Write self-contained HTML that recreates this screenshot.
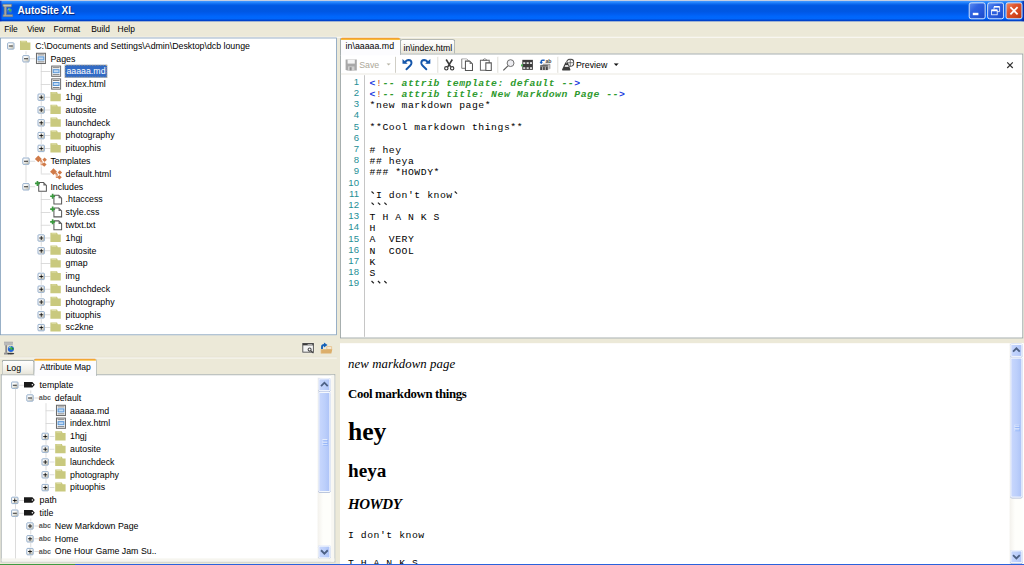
<!DOCTYPE html><html><head><meta charset="utf-8"><title>AutoSite XL</title><style>
*{box-sizing:border-box;margin:0;padding:0}
html,body{width:1024px;height:565px;overflow:hidden;background:#ece9d8}
body{font-family:"Liberation Sans",sans-serif;font-size:11px;color:#000}
#root{position:absolute;left:0;top:0;width:1280px;height:707px;transform:scale(0.8);transform-origin:0 0;background:#ece9d8;overflow:hidden}
.abs{position:absolute}
.title{left:0;top:0;width:1280px;height:27px;background:linear-gradient(to bottom,#c3cde2 0,#c3cde2 0.9px,#3a92ff 1.7px,#2686fd 3px,#0c69ef 5px,#0059e3 7px,#0057e2 14px,#005df0 17.5px,#0066fb 20.5px,#0067fc 23.5px,#0049d4 25px,#003ec2 26.4px,#2358c8 27px)}
.title .txt{left:22px;top:7px;font-weight:bold;font-size:12.5px;color:#fff;text-shadow:1px 1px 1px #0a1f6a;white-space:nowrap;letter-spacing:0px}
.menu{left:0;top:27px;width:1280px;height:19px;background:#ece9d8}
.menu span{position:absolute;top:3px;font-size:10.5px;white-space:nowrap}
.t{position:absolute;white-space:nowrap;font-size:11px;line-height:16px;height:16px}
.panel{background:#fff;border:1px solid #7f9db9}
.vl{position:absolute;width:1px;background:#d4d4d4}
.hl{position:absolute;height:1px;background:#d4d4d4}
.box{position:absolute;width:9px;height:9px;border:1px solid #7b9abf;border-radius:1.5px;background:linear-gradient(135deg,#fff 0%,#fcfcfa 35%,#b9b6a6 100%)}
.box i{position:absolute;left:1px;top:3px;width:5px;height:1px;background:#000}
.box b{position:absolute;left:3px;top:1px;width:1px;height:5px;background:#000}
.ln{font-size:12px;letter-spacing:0.4px;line-height:14px;text-align:right;color:#1e8f96}
.cd{font-family:'Liberation Mono',monospace;font-size:12.2px;letter-spacing:0.68px;line-height:14px;font-weight:normal;white-space:pre;color:#000}
.cd .bl{color:#1a3ae0}.cd .rd{color:#c8502a;font-weight:normal}.cd .gr{color:#2e9a2e;font-weight:bold}
.pv{font-family:'Liberation Serif',serif;white-space:pre;color:#000}
.sel{background:#316ac5;color:#fff;outline:1px dotted #d0b070;outline-offset:-1px}
</style></head><body><div id="root">
<div class="abs title"><div class="abs txt">AutoSite XL</div><div class="abs" style="left:0;top:1px;width:3px;height:26px;background:linear-gradient(to right,rgba(8,40,190,.9),rgba(8,40,190,0))"></div><div class="abs" style="left:1276px;top:1px;width:4px;height:26px;background:linear-gradient(to left,rgba(0,30,160,.9),rgba(0,30,160,0))"></div><svg class="abs" style="left:2px;top:4px" width="18" height="18" viewBox="0 0 18 18"><path d="M1.600 1.400h11v2.600l-1.200 .8h-5.400v9.600h7.800v2.400h-12v-2.400h1.400v-9.600l-1.600-.8z" fill="#a9a9a2" stroke="#7c7c78" stroke-width="0.800"/><path d="M2.400 2.600h9.400" stroke="#d4d4cc" stroke-width="1"/><circle cx="10" cy="9.300" r="3.300" fill="#2468e0"/><path d="M8.200 7.400q1.600-1.400 3.200-.2t.6 2.800q-1.600 1.200-2.600 0t-1.200-2.600z" fill="#3fb558"/><path d="M7.600 8.200q1-1.200 2.200-1" stroke="#bfe6ff" stroke-width="0.900" fill="none"/></svg></div>
<div class="abs menu">
<span style="left:5.2px">File</span>
<span style="left:33.6px">View</span>
<span style="left:67px">Format</span>
<span style="left:114px">Build</span>
<span style="left:147px">Help</span>
</div><div class="abs" style="left:0;top:46px;width:1280px;height:1px;background:#fff"></div>
<div class="abs panel" style="left:0;top:47px;width:421px;height:372px;overflow:hidden">
<div class="box" style="left:7.9px;top:5px"><i></i></div><svg class="abs" style="left:22px;top:1px" width="16" height="16" viewBox="0 0 16 16"><path d="M2 2h8.300l1 2.200h3.700v9.300h-13z" fill="#c9c97e"/><path d="M3.500 3.200h5.800" stroke="#dedea8" stroke-width="1.200"/></svg><div class="t" style="left:41px;top:1px;padding:0 2px;">C:\Documents and Settings\Admin\Desktop\dcb lounge</div><div class="hl" style="left:36.4px;top:25px;width:6.600000000000001px"></div><div class="box" style="left:26.9px;top:21px"><i></i></div><svg class="abs" style="left:41px;top:17px" width="16" height="16" viewBox="0 0 16 16"><rect x="3.600" y="1.600" width="11.200" height="12.800" fill="#fff" stroke="#6c6c6c" stroke-width="1.300"/><rect x="5" y="3.100" width="8.400" height="1.100" fill="#6e6e6e"/><rect x="5" y="11.800" width="8.400" height="1.100" fill="#6e6e6e"/><rect x="5.600" y="6.100" width="7.200" height="3.800" fill="#c4daf2" stroke="#5a98d8" stroke-width="1.300"/></svg><div class="t" style="left:60px;top:17px;padding:0 2px;">Pages</div><div class="hl" style="left:50.4px;top:41px;width:11.600000000000001px"></div><svg class="abs" style="left:60px;top:33px" width="16" height="16" viewBox="0 0 16 16"><rect x="3.600" y="1.600" width="11.200" height="12.800" fill="#fff" stroke="#6c6c6c" stroke-width="1.300"/><rect x="5" y="3.100" width="8.400" height="1.100" fill="#6e6e6e"/><rect x="5" y="11.800" width="8.400" height="1.100" fill="#6e6e6e"/><rect x="5.600" y="6.100" width="7.200" height="3.800" fill="#c4daf2" stroke="#5a98d8" stroke-width="1.300"/></svg><div class="t sel" style="left:80px;top:33px;padding:0 2px;">aaaaa.md</div><div class="hl" style="left:50.4px;top:57px;width:11.600000000000001px"></div><svg class="abs" style="left:60px;top:49px" width="16" height="16" viewBox="0 0 16 16"><rect x="3.600" y="1.600" width="11.200" height="12.800" fill="#fff" stroke="#6c6c6c" stroke-width="1.300"/><rect x="5" y="3.100" width="8.400" height="1.100" fill="#6e6e6e"/><rect x="5" y="11.800" width="8.400" height="1.100" fill="#6e6e6e"/><rect x="5.600" y="6.100" width="7.200" height="3.800" fill="#c4daf2" stroke="#5a98d8" stroke-width="1.300"/></svg><div class="t" style="left:79px;top:49px;padding:0 2px;">index.html</div><div class="hl" style="left:55.4px;top:73px;width:6.600000000000001px"></div><div class="box" style="left:45.9px;top:69px"><i></i><b></b></div><svg class="abs" style="left:60px;top:65px" width="16" height="16" viewBox="0 0 16 16"><path d="M2 2h8.300l1 2.200h3.700v9.300h-13z" fill="#c9c97e"/><path d="M3.500 3.200h5.800" stroke="#dedea8" stroke-width="1.200"/></svg><div class="t" style="left:79px;top:65px;padding:0 2px;">1hgj</div><div class="hl" style="left:55.4px;top:89px;width:6.600000000000001px"></div><div class="box" style="left:45.9px;top:85px"><i></i><b></b></div><svg class="abs" style="left:60px;top:81px" width="16" height="16" viewBox="0 0 16 16"><path d="M2 2h8.300l1 2.200h3.700v9.300h-13z" fill="#c9c97e"/><path d="M3.500 3.200h5.800" stroke="#dedea8" stroke-width="1.200"/></svg><div class="t" style="left:79px;top:81px;padding:0 2px;">autosite</div><div class="hl" style="left:55.4px;top:105px;width:6.600000000000001px"></div><div class="box" style="left:45.9px;top:101px"><i></i><b></b></div><svg class="abs" style="left:60px;top:97px" width="16" height="16" viewBox="0 0 16 16"><path d="M2 2h8.300l1 2.200h3.700v9.300h-13z" fill="#c9c97e"/><path d="M3.500 3.200h5.800" stroke="#dedea8" stroke-width="1.200"/></svg><div class="t" style="left:79px;top:97px;padding:0 2px;">launchdeck</div><div class="hl" style="left:55.4px;top:121px;width:6.600000000000001px"></div><div class="box" style="left:45.9px;top:117px"><i></i><b></b></div><svg class="abs" style="left:60px;top:113px" width="16" height="16" viewBox="0 0 16 16"><path d="M2 2h8.300l1 2.200h3.700v9.300h-13z" fill="#c9c97e"/><path d="M3.500 3.200h5.800" stroke="#dedea8" stroke-width="1.200"/></svg><div class="t" style="left:79px;top:113px;padding:0 2px;">photography</div><div class="hl" style="left:55.4px;top:137px;width:6.600000000000001px"></div><div class="box" style="left:45.9px;top:133px"><i></i><b></b></div><svg class="abs" style="left:60px;top:129px" width="16" height="16" viewBox="0 0 16 16"><path d="M2 2h8.300l1 2.200h3.700v9.300h-13z" fill="#c9c97e"/><path d="M3.500 3.200h5.800" stroke="#dedea8" stroke-width="1.200"/></svg><div class="t" style="left:79px;top:129px;padding:0 2px;">pituophis</div><div class="hl" style="left:36.4px;top:153px;width:6.600000000000001px"></div><div class="box" style="left:26.9px;top:149px"><i></i></div><svg class="abs" style="left:41px;top:145px;overflow:visible" width="16" height="16" viewBox="0 0 16 16"><path d="M5.900 1.300L10.200 5.600 5.900 9.900 1.600 5.600z" fill="#d07a48"/><path d="M8.500 7.200L10 9.200V12.400H12.500" fill="none" stroke="#d8885a" stroke-width="2.400"/><path d="M10 9.200V12.200H12" fill="none" stroke="#fbeee4" stroke-width="0.800"/><path d="M13.800 3.900L16.600 6.700 13.800 9.500 11 6.700z" fill="#d07a48"/><path d="M13.300 9.700L16.200 12.600 13.300 15.500 10.400 12.600z" fill="#d07a48"/></svg><div class="t" style="left:60px;top:145px;padding:0 2px;">Templates</div><div class="hl" style="left:50.4px;top:169px;width:11.600000000000001px"></div><svg class="abs" style="left:60px;top:161px;overflow:visible" width="16" height="16" viewBox="0 0 16 16"><path d="M5.900 1.300L10.200 5.600 5.900 9.900 1.600 5.600z" fill="#d07a48"/><path d="M8.500 7.200L10 9.200V12.400H12.500" fill="none" stroke="#d8885a" stroke-width="2.400"/><path d="M10 9.200V12.200H12" fill="none" stroke="#fbeee4" stroke-width="0.800"/><path d="M13.800 3.900L16.600 6.700 13.800 9.500 11 6.700z" fill="#d07a48"/><path d="M13.300 9.700L16.200 12.600 13.300 15.500 10.400 12.600z" fill="#d07a48"/></svg><div class="t" style="left:79px;top:161px;padding:0 2px;">default.html</div><div class="hl" style="left:36.4px;top:185px;width:6.600000000000001px"></div><div class="box" style="left:26.9px;top:181px"><i></i></div><svg class="abs" style="left:41px;top:177px;overflow:visible" width="16" height="16" viewBox="0 0 16 16"><path d="M6.400 3.100h6l3.600 3.600v7.400h-9.600z" fill="#fff" stroke="#5a5a5a" stroke-width="1.300"/><path d="M12.200 3.100v3.800h3.800z" fill="#6a6a6a"/><path d="M4.800 1.200v6.200M1.700 4.300h6.200" stroke="#3a9a3e" stroke-width="2.100"/></svg><div class="t" style="left:60px;top:177px;padding:0 2px;">Includes</div><div class="hl" style="left:50.4px;top:201px;width:11.600000000000001px"></div><svg class="abs" style="left:60px;top:193px;overflow:visible" width="16" height="16" viewBox="0 0 16 16"><path d="M6.400 3.100h6l3.600 3.600v7.400h-9.600z" fill="#fff" stroke="#5a5a5a" stroke-width="1.300"/><path d="M12.200 3.100v3.800h3.800z" fill="#6a6a6a"/><path d="M4.800 1.200v6.200M1.700 4.300h6.200" stroke="#3a9a3e" stroke-width="2.100"/></svg><div class="t" style="left:79px;top:193px;padding:0 2px;">.htaccess</div><div class="hl" style="left:50.4px;top:217px;width:11.600000000000001px"></div><svg class="abs" style="left:60px;top:209px;overflow:visible" width="16" height="16" viewBox="0 0 16 16"><path d="M6.400 3.100h6l3.600 3.600v7.400h-9.600z" fill="#fff" stroke="#5a5a5a" stroke-width="1.300"/><path d="M12.200 3.100v3.800h3.800z" fill="#6a6a6a"/><path d="M4.800 1.200v6.200M1.700 4.300h6.200" stroke="#3a9a3e" stroke-width="2.100"/></svg><div class="t" style="left:79px;top:209px;padding:0 2px;">style.css</div><div class="hl" style="left:50.4px;top:233px;width:11.600000000000001px"></div><svg class="abs" style="left:60px;top:225px;overflow:visible" width="16" height="16" viewBox="0 0 16 16"><path d="M6.400 3.100h6l3.600 3.600v7.400h-9.600z" fill="#fff" stroke="#5a5a5a" stroke-width="1.300"/><path d="M12.200 3.100v3.800h3.800z" fill="#6a6a6a"/><path d="M4.800 1.200v6.200M1.700 4.300h6.200" stroke="#3a9a3e" stroke-width="2.100"/></svg><div class="t" style="left:79px;top:225px;padding:0 2px;">twtxt.txt</div><div class="hl" style="left:55.4px;top:249px;width:6.600000000000001px"></div><div class="box" style="left:45.9px;top:245px"><i></i><b></b></div><svg class="abs" style="left:60px;top:241px" width="16" height="16" viewBox="0 0 16 16"><path d="M2 2h8.300l1 2.200h3.700v9.300h-13z" fill="#c9c97e"/><path d="M3.500 3.200h5.800" stroke="#dedea8" stroke-width="1.200"/></svg><div class="t" style="left:79px;top:241px;padding:0 2px;">1hgj</div><div class="hl" style="left:55.4px;top:265px;width:6.600000000000001px"></div><div class="box" style="left:45.9px;top:261px"><i></i><b></b></div><svg class="abs" style="left:60px;top:257px" width="16" height="16" viewBox="0 0 16 16"><path d="M2 2h8.300l1 2.200h3.700v9.300h-13z" fill="#c9c97e"/><path d="M3.500 3.200h5.800" stroke="#dedea8" stroke-width="1.200"/></svg><div class="t" style="left:79px;top:257px;padding:0 2px;">autosite</div><div class="hl" style="left:50.4px;top:281px;width:11.600000000000001px"></div><svg class="abs" style="left:60px;top:273px" width="16" height="16" viewBox="0 0 16 16"><path d="M2 2h8.300l1 2.200h3.700v9.300h-13z" fill="#c9c97e"/><path d="M3.500 3.200h5.800" stroke="#dedea8" stroke-width="1.200"/></svg><div class="t" style="left:79px;top:273px;padding:0 2px;">gmap</div><div class="hl" style="left:55.4px;top:297px;width:6.600000000000001px"></div><div class="box" style="left:45.9px;top:293px"><i></i><b></b></div><svg class="abs" style="left:60px;top:289px" width="16" height="16" viewBox="0 0 16 16"><path d="M2 2h8.300l1 2.200h3.700v9.300h-13z" fill="#c9c97e"/><path d="M3.500 3.200h5.800" stroke="#dedea8" stroke-width="1.200"/></svg><div class="t" style="left:79px;top:289px;padding:0 2px;">img</div><div class="hl" style="left:55.4px;top:313px;width:6.600000000000001px"></div><div class="box" style="left:45.9px;top:309px"><i></i><b></b></div><svg class="abs" style="left:60px;top:305px" width="16" height="16" viewBox="0 0 16 16"><path d="M2 2h8.300l1 2.200h3.700v9.300h-13z" fill="#c9c97e"/><path d="M3.500 3.200h5.800" stroke="#dedea8" stroke-width="1.200"/></svg><div class="t" style="left:79px;top:305px;padding:0 2px;">launchdeck</div><div class="hl" style="left:55.4px;top:329px;width:6.600000000000001px"></div><div class="box" style="left:45.9px;top:325px"><i></i><b></b></div><svg class="abs" style="left:60px;top:321px" width="16" height="16" viewBox="0 0 16 16"><path d="M2 2h8.300l1 2.200h3.700v9.300h-13z" fill="#c9c97e"/><path d="M3.500 3.200h5.800" stroke="#dedea8" stroke-width="1.200"/></svg><div class="t" style="left:79px;top:321px;padding:0 2px;">photography</div><div class="hl" style="left:55.4px;top:345px;width:6.600000000000001px"></div><div class="box" style="left:45.9px;top:341px"><i></i><b></b></div><svg class="abs" style="left:60px;top:337px" width="16" height="16" viewBox="0 0 16 16"><path d="M2 2h8.300l1 2.200h3.700v9.300h-13z" fill="#c9c97e"/><path d="M3.500 3.200h5.800" stroke="#dedea8" stroke-width="1.200"/></svg><div class="t" style="left:79px;top:337px;padding:0 2px;">pituophis</div><div class="hl" style="left:55.4px;top:361px;width:6.600000000000001px"></div><div class="box" style="left:45.9px;top:357px"><i></i><b></b></div><svg class="abs" style="left:60px;top:353px" width="16" height="16" viewBox="0 0 16 16"><path d="M2 2h8.300l1 2.200h3.700v9.300h-13z" fill="#c9c97e"/><path d="M3.500 3.200h5.800" stroke="#dedea8" stroke-width="1.200"/></svg><div class="t" style="left:79px;top:353px;padding:0 2px;">sc2kne</div><div class="vl" style="left:31.4px;top:16px;height:4px"></div><div class="vl" style="left:50.4px;top:32px;height:9px"></div><div class="vl" style="left:50.4px;top:41px;height:16px"></div><div class="vl" style="left:50.4px;top:57px;height:11px"></div><div class="vl" style="left:50.4px;top:78px;height:6px"></div><div class="vl" style="left:50.4px;top:94px;height:6px"></div><div class="vl" style="left:50.4px;top:110px;height:6px"></div><div class="vl" style="left:50.4px;top:126px;height:6px"></div><div class="vl" style="left:31.4px;top:30px;height:118px"></div><div class="vl" style="left:50.4px;top:160px;height:9px"></div><div class="vl" style="left:31.4px;top:158px;height:22px"></div><div class="vl" style="left:50.4px;top:192px;height:9px"></div><div class="vl" style="left:50.4px;top:201px;height:16px"></div><div class="vl" style="left:50.4px;top:217px;height:16px"></div><div class="vl" style="left:50.4px;top:233px;height:11px"></div><div class="vl" style="left:50.4px;top:254px;height:6px"></div><div class="vl" style="left:50.4px;top:270px;height:11px"></div><div class="vl" style="left:50.4px;top:281px;height:11px"></div><div class="vl" style="left:50.4px;top:302px;height:6px"></div><div class="vl" style="left:50.4px;top:318px;height:6px"></div><div class="vl" style="left:50.4px;top:334px;height:6px"></div><div class="vl" style="left:50.4px;top:350px;height:6px"></div>
</div>
<div class="abs" style="left:1211px;top:3px;width:21px;height:21px;border:1px solid #fff;border-radius:3px;background:linear-gradient(135deg,#5d8df0 0%,#2f63e2 35%,#2456d8 70%,#1c48c4 100%);box-shadow:inset 0 0 1px rgba(255,255,255,.4)"><div class="abs" style="left:4px;top:12px;width:7px;height:3px;background:#fff"></div></div><div class="abs" style="left:1234px;top:3px;width:21px;height:21px;border:1px solid #fff;border-radius:3px;background:linear-gradient(135deg,#5d8df0 0%,#2f63e2 35%,#2456d8 70%,#1c48c4 100%);box-shadow:inset 0 0 1px rgba(255,255,255,.4)"><svg class="abs" style="left:0;top:0" width="19" height="19"><path d="M7.5 7.5v-3h7v6h-3" fill="none" stroke="#fff" stroke-width="1"/><path d="M7.5 4.5h7" stroke="#fff" stroke-width="2"/><rect x="4.5" y="8.5" width="7" height="6" fill="none" stroke="#fff" stroke-width="1"/><path d="M4.5 9h7" stroke="#fff" stroke-width="2"/></svg></div><div class="abs" style="left:1257px;top:3px;width:21px;height:21px;border:1px solid #fff;border-radius:3px;background:linear-gradient(135deg,#f08a68 0%,#e0562e 35%,#d2441c 70%,#b8340e 100%);box-shadow:inset 0 0 1px rgba(255,255,255,.4)"><svg class="abs" style="left:0;top:0" width="19" height="19"><path d="M5 5l9 9M14 5l-9 9" stroke="#fff" stroke-width="2.2" stroke-linecap="butt"/></svg></div>
<div class="abs" style="left:0;top:446.400px;width:421px;height:1px;background:#dedbcb"></div><div class="abs" style="left:0;top:447.400px;width:421px;height:1px;background:#fff"></div>
<svg class="abs" style="left:4px;top:427px;overflow:visible" width="16" height="17" viewBox="0 0 16 17"><path d="M1 0.300h11v4.200h-11z" fill="#9c9c9c"/><path d="M1 3h11" stroke="#f0f0f0" stroke-width="0.900"/><path d="M1 0.300h11v1.400h-11z" fill="#b4b4b4"/><path d="M2.600 4.500h2.300v9.500h-2.300z" fill="#8a8a8a"/><path d="M1 13.800h6v2.400h-6z" fill="#909090"/><ellipse cx="9.500" cy="15" rx="4.300" ry="1.100" fill="#3a3a3a"/><circle cx="9.600" cy="9.200" r="3.800" fill="#2263dc"/><path d="M7.500 7q1.800-1.600 3.400-.4t.8 3q-1.400 1.400-2.600 .2t-1.600-2.800z" fill="#3db054"/><path d="M6.800 8.200q1.200-1.800 2.800-1.800" stroke="#cfeaff" stroke-width="1" fill="none"/><circle cx="11.800" cy="9" r="1.200" fill="#1f8a3c"/></svg>
<svg class="abs" style="left:378px;top:427px;overflow:visible" width="16" height="16" viewBox="0 0 16 16"><rect x="-0.600" y="1.300" width="15.400" height="13.200" rx="1" fill="#f8f6ee"/><rect x="0.500" y="2.400" width="13.200" height="10.800" fill="#f4f4f4" stroke="#454545" stroke-width="1.100"/><rect x="0.500" y="2.400" width="13.200" height="2.300" fill="#3c3c3c"/><path d="M6.500 3.600h6" stroke="#d8d8d8" stroke-width="0.900"/><circle cx="9" cy="10" r="1.900" fill="#fff" stroke="#444" stroke-width="1.300"/><path d="M10.400 11.400l3.400 3" stroke="#444" stroke-width="1.500"/></svg>
<svg class="abs" style="left:400px;top:426px;overflow:visible" width="16" height="17" viewBox="0 0 16 17"><path d="M8.500 7.200h6v3.500h-6z" fill="#f8ead2" stroke="#e6c08c" stroke-width="1"/><path d="M1.200 10.500h14.200l-1.200 5.300h-13z" fill="#dcae6a"/><path d="M1.200 10.500v5.300" stroke="#e9c690" stroke-width="0.800"/><path d="M2.500 10.200V7.600Q2.500 5.200 5.200 5.200" fill="none" stroke="#1560b8" stroke-width="2.300"/><path d="M4.900 2l4.500 3.200-4.500 3.200z" fill="#1560b8"/></svg>
<div class="abs" style="left:1px;top:468px;width:418px;height:235px;background:#fff;border:1px solid #9aa3a3;border-bottom-color:#aeb3b0"></div>
<div class="abs" style="left:2px;top:450px;width:41px;height:18px;border:1px solid #919b9c;border-bottom:none;border-radius:3px 3px 0 0;background:linear-gradient(#fff,#f3f2ec 60%,#e6e4d8)"></div>
<div class="t" style="left:8px;top:452px">Log</div>
<div class="abs" style="left:42px;top:448px;width:79px;height:22px;border:1px solid #919b9c;border-bottom:none;border-top:none;border-radius:3px 3px 0 0;background:#fcfcfe;overflow:hidden"><div class="abs" style="left:-1px;top:0;width:79px;height:3px;background:linear-gradient(#e68b2c,#ffc73c);border-radius:3px 3px 0 0"></div></div>
<div class="t" style="left:50px;top:450px;font-size:10.700px">Attribute Map</div>
<div class="abs" style="left:2px;top:469px;width:396px;height:231px;overflow:hidden">
<div class="hl" style="left:21.9px;top:12px;width:6.600000000000001px"></div><div class="box" style="left:12.399999999999999px;top:8px"><i></i></div><svg class="abs" style="left:26.5px;top:4px" width="16" height="16" viewBox="0 0 16 16"><path d="M1 4.5h10.5l3 3.5-3 3.5h-10.5z" fill="#1a1a1a"/><circle cx="11.5" cy="8" r="1" fill="#fff"/></svg><div class="t" style="left:45.5px;top:4px;padding:0 2px;">template</div><div class="hl" style="left:40.9px;top:28px;width:6.600000000000001px"></div><div class="box" style="left:31.4px;top:24px"><i></i></div><div class="abs" style="left:45.5px;top:22.2px;width:16px;height:16px;font-size:9px;font-weight:bold;color:#5a5a5a;line-height:13px;letter-spacing:-0.2px;overflow:hidden;padding-left:1px">abc</div><div class="t" style="left:64.5px;top:20px;padding:0 2px;">default</div><div class="hl" style="left:54.9px;top:44px;width:11.600000000000001px"></div><svg class="abs" style="left:64.5px;top:36px" width="16" height="16" viewBox="0 0 16 16"><rect x="3.600" y="1.600" width="11.200" height="12.800" fill="#fff" stroke="#6c6c6c" stroke-width="1.300"/><rect x="5" y="3.100" width="8.400" height="1.100" fill="#6e6e6e"/><rect x="5" y="11.800" width="8.400" height="1.100" fill="#6e6e6e"/><rect x="5.600" y="6.100" width="7.200" height="3.800" fill="#c4daf2" stroke="#5a98d8" stroke-width="1.300"/></svg><div class="t" style="left:83.5px;top:36px;padding:0 2px;">aaaaa.md</div><div class="hl" style="left:54.9px;top:60px;width:11.600000000000001px"></div><svg class="abs" style="left:64.5px;top:52px" width="16" height="16" viewBox="0 0 16 16"><rect x="3.600" y="1.600" width="11.200" height="12.800" fill="#fff" stroke="#6c6c6c" stroke-width="1.300"/><rect x="5" y="3.100" width="8.400" height="1.100" fill="#6e6e6e"/><rect x="5" y="11.800" width="8.400" height="1.100" fill="#6e6e6e"/><rect x="5.600" y="6.100" width="7.200" height="3.800" fill="#c4daf2" stroke="#5a98d8" stroke-width="1.300"/></svg><div class="t" style="left:83.5px;top:52px;padding:0 2px;">index.html</div><div class="hl" style="left:59.9px;top:76px;width:6.600000000000001px"></div><div class="box" style="left:50.4px;top:72px"><i></i><b></b></div><svg class="abs" style="left:64.5px;top:68px" width="16" height="16" viewBox="0 0 16 16"><path d="M2 2h8.300l1 2.200h3.700v9.300h-13z" fill="#c9c97e"/><path d="M3.500 3.200h5.800" stroke="#dedea8" stroke-width="1.200"/></svg><div class="t" style="left:83.5px;top:68px;padding:0 2px;">1hgj</div><div class="hl" style="left:59.9px;top:92px;width:6.600000000000001px"></div><div class="box" style="left:50.4px;top:88px"><i></i><b></b></div><svg class="abs" style="left:64.5px;top:84px" width="16" height="16" viewBox="0 0 16 16"><path d="M2 2h8.300l1 2.200h3.700v9.300h-13z" fill="#c9c97e"/><path d="M3.500 3.200h5.800" stroke="#dedea8" stroke-width="1.200"/></svg><div class="t" style="left:83.5px;top:84px;padding:0 2px;">autosite</div><div class="hl" style="left:59.9px;top:108px;width:6.600000000000001px"></div><div class="box" style="left:50.4px;top:104px"><i></i><b></b></div><svg class="abs" style="left:64.5px;top:100px" width="16" height="16" viewBox="0 0 16 16"><path d="M2 2h8.300l1 2.200h3.700v9.300h-13z" fill="#c9c97e"/><path d="M3.500 3.200h5.800" stroke="#dedea8" stroke-width="1.200"/></svg><div class="t" style="left:83.5px;top:100px;padding:0 2px;">launchdeck</div><div class="hl" style="left:59.9px;top:124px;width:6.600000000000001px"></div><div class="box" style="left:50.4px;top:120px"><i></i><b></b></div><svg class="abs" style="left:64.5px;top:116px" width="16" height="16" viewBox="0 0 16 16"><path d="M2 2h8.300l1 2.200h3.700v9.300h-13z" fill="#c9c97e"/><path d="M3.500 3.200h5.800" stroke="#dedea8" stroke-width="1.200"/></svg><div class="t" style="left:83.5px;top:116px;padding:0 2px;">photography</div><div class="hl" style="left:59.9px;top:140px;width:6.600000000000001px"></div><div class="box" style="left:50.4px;top:136px"><i></i><b></b></div><svg class="abs" style="left:64.5px;top:132px" width="16" height="16" viewBox="0 0 16 16"><path d="M2 2h8.300l1 2.200h3.700v9.300h-13z" fill="#c9c97e"/><path d="M3.500 3.200h5.800" stroke="#dedea8" stroke-width="1.200"/></svg><div class="t" style="left:83.5px;top:132px;padding:0 2px;">pituophis</div><div class="hl" style="left:21.9px;top:156px;width:6.600000000000001px"></div><div class="box" style="left:12.399999999999999px;top:152px"><i></i><b></b></div><svg class="abs" style="left:26.5px;top:148px" width="16" height="16" viewBox="0 0 16 16"><path d="M1 4.5h10.5l3 3.5-3 3.5h-10.5z" fill="#1a1a1a"/><circle cx="11.5" cy="8" r="1" fill="#fff"/></svg><div class="t" style="left:45.5px;top:148px;padding:0 2px;">path</div><div class="hl" style="left:21.9px;top:172px;width:6.600000000000001px"></div><div class="box" style="left:12.399999999999999px;top:168px"><i></i></div><svg class="abs" style="left:26.5px;top:164px" width="16" height="16" viewBox="0 0 16 16"><path d="M1 4.5h10.5l3 3.5-3 3.5h-10.5z" fill="#1a1a1a"/><circle cx="11.5" cy="8" r="1" fill="#fff"/></svg><div class="t" style="left:45.5px;top:164px;padding:0 2px;">title</div><div class="hl" style="left:40.9px;top:188px;width:6.600000000000001px"></div><div class="box" style="left:31.4px;top:184px"><i></i><b></b></div><div class="abs" style="left:45.5px;top:182.2px;width:16px;height:16px;font-size:9px;font-weight:bold;color:#5a5a5a;line-height:13px;letter-spacing:-0.2px;overflow:hidden;padding-left:1px">abc</div><div class="t" style="left:64.5px;top:180px;padding:0 2px;">New Markdown Page</div><div class="hl" style="left:40.9px;top:204px;width:6.600000000000001px"></div><div class="box" style="left:31.4px;top:200px"><i></i><b></b></div><div class="abs" style="left:45.5px;top:198.2px;width:16px;height:16px;font-size:9px;font-weight:bold;color:#5a5a5a;line-height:13px;letter-spacing:-0.2px;overflow:hidden;padding-left:1px">abc</div><div class="t" style="left:64.5px;top:196px;padding:0 2px;">Home</div><div class="hl" style="left:40.9px;top:220px;width:6.600000000000001px"></div><div class="box" style="left:31.4px;top:216px"><i></i><b></b></div><div class="abs" style="left:45.5px;top:214.2px;width:16px;height:16px;font-size:9px;font-weight:bold;color:#5a5a5a;line-height:13px;letter-spacing:-0.2px;overflow:hidden;padding-left:1px">abc</div><div class="t" style="left:64.5px;top:212px;padding:0 2px;">One Hour Game Jam Su..</div><div class="hl" style="left:40.9px;top:236px;width:6.600000000000001px"></div><div class="box" style="left:31.4px;top:232px"><i></i><b></b></div><div class="abs" style="left:45.5px;top:230.2px;width:16px;height:16px;font-size:9px;font-weight:bold;color:#5a5a5a;line-height:13px;letter-spacing:-0.2px;overflow:hidden;padding-left:1px">abc</div><div class="t" style="left:64.5px;top:228px;padding:0 2px;"></div><div class="hl" style="left:21.9px;top:252px;width:6.600000000000001px"></div><div class="box" style="left:12.399999999999999px;top:248px"><i></i><b></b></div><svg class="abs" style="left:26.5px;top:244px" width="16" height="16" viewBox="0 0 16 16"><path d="M1 4.5h10.5l3 3.5-3 3.5h-10.5z" fill="#1a1a1a"/><circle cx="11.5" cy="8" r="1" fill="#fff"/></svg><div class="t" style="left:45.5px;top:244px;padding:0 2px;"></div><div class="vl" style="left:35.9px;top:19px;height:4px"></div><div class="vl" style="left:54.9px;top:35px;height:9px"></div><div class="vl" style="left:54.9px;top:44px;height:16px"></div><div class="vl" style="left:54.9px;top:60px;height:11px"></div><div class="vl" style="left:54.9px;top:81px;height:6px"></div><div class="vl" style="left:54.9px;top:97px;height:6px"></div><div class="vl" style="left:54.9px;top:113px;height:6px"></div><div class="vl" style="left:54.9px;top:129px;height:6px"></div><div class="vl" style="left:16.9px;top:17px;height:134px"></div><div class="vl" style="left:16.9px;top:161px;height:6px"></div><div class="vl" style="left:35.9px;top:179px;height:4px"></div><div class="vl" style="left:35.9px;top:193px;height:6px"></div><div class="vl" style="left:35.9px;top:209px;height:6px"></div><div class="vl" style="left:35.9px;top:225px;height:6px"></div><div class="vl" style="left:16.9px;top:177px;height:70px"></div>
</div>
<div class="abs" style="left:397px;top:472px;width:17px;height:226.5px;background:linear-gradient(to right,#f3f1ec,#fefefb 40%,#fefefb)"></div><div class="abs" style="left:398px;top:473px;width:15px;height:16px;border:1px solid #f4f7ff;border-radius:2px;background:linear-gradient(to right,#c8d7fd,#bccffb 55%,#adc3f7);box-shadow:0 1px 0.5px #a9b6d4, 0 0 0 0.5px #c4d2f4"><svg class="abs" style="left:-1px;top:-1px" width="15" height="16"><path d="M3.300 9.600l4.200-4.200 4.200 4.200" fill="none" stroke="#4d6185" stroke-width="2.300"/></svg></div><div class="abs" style="left:398px;top:681.5px;width:15px;height:16px;border:1px solid #f4f7ff;border-radius:2px;background:linear-gradient(to right,#c8d7fd,#bccffb 55%,#adc3f7);box-shadow:0 1px 0.5px #a9b6d4, 0 0 0 0.5px #c4d2f4"><svg class="abs" style="left:-1px;top:-1px" width="15" height="16"><path d="M3.300 5.800l4.200 4.200 4.200-4.200" fill="none" stroke="#4d6185" stroke-width="2.300"/></svg></div><div class="abs" style="left:398px;top:490px;width:15px;height:125px;border:1px solid #f4f7ff;border-radius:2px;background:linear-gradient(to right,#c8d7fd,#bccffb 55%,#adc3f7);box-shadow:0 1px 0.5px #a9b6d4, 0 0 0 0.5px #c4d2f4"><div class="abs" style="left:3.500px;top:58px;width:6px;height:1px;background:#eef4fe"></div><div class="abs" style="left:4.5px;top:59px;width:6px;height:1px;background:#8cb0f8"></div><div class="abs" style="left:3.500px;top:60px;width:6px;height:1px;background:#eef4fe"></div><div class="abs" style="left:4.5px;top:61px;width:6px;height:1px;background:#8cb0f8"></div><div class="abs" style="left:3.500px;top:62px;width:6px;height:1px;background:#eef4fe"></div><div class="abs" style="left:4.5px;top:63px;width:6px;height:1px;background:#8cb0f8"></div><div class="abs" style="left:3.500px;top:64px;width:6px;height:1px;background:#eef4fe"></div><div class="abs" style="left:4.5px;top:65px;width:6px;height:1px;background:#8cb0f8"></div></div>
<div class="abs" style="left:2px;top:698.200px;width:416px;height:3.800px;background:#f6f5ef"></div><div class="abs" style="left:414px;top:469px;width:4px;height:233px;background:#f8f7f2"></div>
<div class="abs" style="left:425px;top:67px;width:854px;height:356.300px;background:#fff;border:1px solid #919b9c"></div>
<div class="abs" style="left:500px;top:49px;width:69px;height:18px;border:1px solid #919b9c;border-bottom:none;border-radius:3px 3px 0 0;background:linear-gradient(#fff,#f3f2ec 60%,#e6e4d8)"></div>
<div class="t" style="left:504.500px;top:52.200px;font-size:10.800px">in\index.html</div>
<div class="abs" style="left:425px;top:47px;width:76px;height:22px;border:1px solid #919b9c;border-bottom:none;border-top:none;border-radius:3px 3px 0 0;background:#fcfcfe;overflow:hidden"><div class="abs" style="left:-1px;top:0;width:76px;height:3px;background:linear-gradient(#e68b2c,#ffc73c);border-radius:3px 3px 0 0"></div></div>
<div class="t" style="left:432px;top:49px">in\aaaaa.md</div>
<div class="abs" style="left:426px;top:91.600px;width:852px;height:1.600px;background:#e6e4d9"></div>
<div class="abs" style="left:494px;top:71px;width:1px;height:20px;background:#c5c2b8"></div><div class="abs" style="left:495px;top:71px;width:1px;height:20px;background:#fff"></div>
<div class="abs" style="left:546.5px;top:71px;width:1px;height:20px;background:#c5c2b8"></div><div class="abs" style="left:547.5px;top:71px;width:1px;height:20px;background:#fff"></div>
<div class="abs" style="left:621.5px;top:71px;width:1px;height:20px;background:#c5c2b8"></div><div class="abs" style="left:622.5px;top:71px;width:1px;height:20px;background:#fff"></div>
<div class="abs" style="left:697px;top:71px;width:1px;height:20px;background:#c5c2b8"></div><div class="abs" style="left:698px;top:71px;width:1px;height:20px;background:#fff"></div>
<svg class="abs" style="left:431px;top:73px" width="16" height="16" viewBox="0 0 16 16"><path d="M1 1.500h14v13.500h-12.500l-1.500-1.500z" fill="#a8a8a8"/><rect x="3.500" y="1.500" width="9" height="5" fill="#f4f4f4"/><rect x="4" y="10" width="8" height="5" fill="#cfcfcf"/><rect x="6" y="11" width="2.500" height="4" fill="#8e8e8e"/></svg>
<div class="t" style="left:449px;top:73px;color:#aca899;font-size:11px">Save</div>
<svg class="abs" style="left:483px;top:79px" width="6" height="4"><path d="M0 0h5.500l-2.750 3z" fill="#b8b5a6"/></svg>
<svg class="abs" style="left:501.5px;top:73px" width="16" height="16" viewBox="0 0 16 16"><path d="M1.100 0.600V6.800H7.600z" fill="#1557ab"/><path d="M4.300 5Q5.800 1.900 8.800 1.900Q12.300 2.100 12.400 5.700Q12.300 7.500 10.600 9.200L6.100 13.600" fill="none" stroke="#1557ab" stroke-width="2.400" stroke-linecap="round"/></svg>
<svg class="abs" style="left:523px;top:73px" width="16" height="16" viewBox="0 0 16 16"><g transform="translate(16,0) scale(-1,1)"><path d="M1.100 0.600V6.800H7.600z" fill="#1557ab"/><path d="M4.300 5Q5.800 1.900 8.800 1.900Q12.300 2.100 12.400 5.700Q12.300 7.500 10.600 9.200L6.100 13.600" fill="none" stroke="#1557ab" stroke-width="2.400" stroke-linecap="round"/></g></svg>
<svg class="abs" style="left:553.5px;top:73px" width="16" height="16" viewBox="0 0 16 16"><path d="M3.700 1.400L9.400 10.600M11.400 1.400L5.700 10.600" stroke="#3a3a3a" stroke-width="2" fill="none"/><circle cx="3.900" cy="12.400" r="2.100" fill="#fff" stroke="#3a3a3a" stroke-width="1.400"/><circle cx="11.200" cy="12.400" r="2.100" fill="#fff" stroke="#3a3a3a" stroke-width="1.400"/></svg>
<svg class="abs" style="left:576px;top:73px" width="16" height="16" viewBox="0 0 16 16"><path d="M1.200 0.400h5.800l3 3v9h-8.800z" fill="#fff" stroke="#7a7a7a" stroke-width="1.200"/><path d="M5.800 3.400h5.200l3.600 3.600v8.200h-8.800z" fill="#fff" stroke="#555" stroke-width="1.300"/><path d="M11 3.400v3.600h3.600z" fill="#777"/></svg>
<svg class="abs" style="left:598.5px;top:73px" width="16" height="16" viewBox="0 0 16 16"><path d="M1.500 2.200h11v12.600h-11z" fill="#fff" stroke="#666" stroke-width="1.300"/><path d="M4.200 2.600l2.800-3 2.800 3z" fill="#ccc" stroke="#666" stroke-width="1"/><path d="M8.300 5.600h6.800v9.600h-6.800z" fill="#fff" stroke="#555" stroke-width="1.300"/></svg>
<svg class="abs" style="left:628px;top:73px" width="16" height="16" viewBox="0 0 16 16"><circle cx="10.200" cy="5.900" r="4.300" fill="#ededf1" stroke="#6a6a6a" stroke-width="1.200"/><path d="M6.900 9.400l-5.700 5.500" stroke="#5a5a5a" stroke-width="1.500"/></svg>
<svg class="abs" style="left:651px;top:73px" width="16" height="16" viewBox="0 0 16 16"><rect x="1.900" y="1.800" width="13.200" height="12.500" fill="#3c3c3c"/><rect x="3" y="4.800" width="2.600" height="2.100" fill="#eaeaea"/><rect x="7.300" y="4.800" width="2.600" height="2.100" fill="#eaeaea"/><rect x="11.400" y="4.800" width="2.600" height="2.100" fill="#eaeaea"/><rect x="3" y="11" width="2.600" height="2.200" fill="#d8d8d8"/><rect x="7.300" y="11" width="2.600" height="2.200" fill="#d8d8d8"/><rect x="11.400" y="11" width="2.600" height="2.200" fill="#d8d8d8"/><rect x="0.200" y="7.400" width="2.600" height="2.800" rx="1" fill="#45b050"/></svg>
<svg class="abs" style="left:674px;top:73px" width="16" height="16" viewBox="0 0 16 16"><path d="M4.500 7.300H13.300V13" fill="none" stroke="#666" stroke-width="0.900"/><path d="M3 8.500H12V14" fill="none" stroke="#888" stroke-width="0.800"/><rect x="1.200" y="8.600" width="9.600" height="6" fill="#454545"/><path d="M4.300 10.500v4.100M7.600 10.500v4.100" stroke="#f0f0f0" stroke-width="0.900"/><path d="M1.200 10.300h9.600" stroke="#cfcfcf" stroke-width="0.600"/><path d="M6.800 2.300H4.200Q2.500 2.300 2.500 4V5.200" fill="none" stroke="#1c60c0" stroke-width="1.900"/><path d="M0.400 4.400h4.200l-2.100 2.900z" fill="#1c60c0"/><text x="7.800" y="5.600" font-family="Liberation Sans" font-size="6.500" font-weight="bold" fill="#444">ab</text></svg>
<svg class="abs" style="left:701.5px;top:73px" width="16" height="16" viewBox="0 0 16 16"><circle cx="10.800" cy="5.400" r="4.500" fill="#fff" stroke="#4a4a4a" stroke-width="1.300"/><path d="M10.800 1v8.800M6.400 5.400h8.800" stroke="#555" stroke-width="1"/><path d="M4.800 4.800h3l3.200 9q.4 1.400-1 1.400h-8.400q-1.400 0-1-1.400z" fill="#3c3c3c"/><path d="M4.600 8.200h3.400l.9 2.400h-5.200z" fill="#d8d8d8"/><path d="M4.800 4.600l1.500 2 1.500-2z" fill="#999"/></svg>
<div class="t" style="left:720px;top:73px;font-size:11px">Preview</div>
<svg class="abs" style="left:767px;top:79px" width="7" height="4"><path d="M0 0h6.500l-3.250 3.500z" fill="#111"/></svg>
<svg class="abs" style="left:1258.400px;top:76.700px" width="9" height="9"><path d="M1 1l7 7M8 1l-7 7" stroke="#333" stroke-width="1.500"/></svg>
<div class="abs" style="left:455px;top:94px;width:1px;height:327px;background:#b8b8b8"></div>
<div class="abs ln" style="left:427px;top:95.1px;width:22.400px">1</div>
<div class="abs cd" style="left:462px;top:96.6px"><b class="bl">&lt;</b><b class="rd">!</b><i class="gr">-- attrib template: default --</i><b class="bl">&gt;</b></div>
<div class="abs ln" style="left:427px;top:109.1px;width:22.400px">2</div>
<div class="abs cd" style="left:462px;top:110.6px"><b class="bl">&lt;</b><b class="rd">!</b><i class="gr">-- attrib title: New Markdown Page --</i><b class="bl">&gt;</b></div>
<div class="abs ln" style="left:427px;top:123.1px;width:22.400px">3</div>
<div class="abs cd" style="left:462px;top:124.6px">*new markdown page*</div>
<div class="abs ln" style="left:427px;top:137.1px;width:22.400px">4</div>
<div class="abs cd" style="left:462px;top:138.6px"></div>
<div class="abs ln" style="left:427px;top:151.1px;width:22.400px">5</div>
<div class="abs cd" style="left:462px;top:152.6px">**Cool markdown things**</div>
<div class="abs ln" style="left:427px;top:165.1px;width:22.400px">6</div>
<div class="abs cd" style="left:462px;top:166.6px"></div>
<div class="abs ln" style="left:427px;top:179.1px;width:22.400px">7</div>
<div class="abs cd" style="left:462px;top:180.6px"># hey</div>
<div class="abs ln" style="left:427px;top:193.1px;width:22.400px">8</div>
<div class="abs cd" style="left:462px;top:194.6px">## heya</div>
<div class="abs ln" style="left:427px;top:207.1px;width:22.400px">9</div>
<div class="abs cd" style="left:462px;top:208.6px">### *HOWDY*</div>
<div class="abs ln" style="left:427px;top:221.1px;width:22.400px">10</div>
<div class="abs cd" style="left:462px;top:222.6px"></div>
<div class="abs ln" style="left:427px;top:235.1px;width:22.400px">11</div>
<div class="abs cd" style="left:462px;top:236.6px"><svg width="8" height="14" style="vertical-align:top"><path d="M2.400 2.300L5.300 5" stroke="#222" stroke-width="1.500"/></svg>I don&#x27;t know<svg width="8" height="14" style="vertical-align:top"><path d="M2.400 2.300L5.300 5" stroke="#222" stroke-width="1.500"/></svg></div>
<div class="abs ln" style="left:427px;top:249.1px;width:22.400px">12</div>
<div class="abs cd" style="left:462px;top:250.6px"><svg width="8" height="14" style="vertical-align:top"><path d="M2.400 2.300L5.300 5" stroke="#222" stroke-width="1.500"/></svg><svg width="8" height="14" style="vertical-align:top"><path d="M2.400 2.300L5.300 5" stroke="#222" stroke-width="1.500"/></svg><svg width="8" height="14" style="vertical-align:top"><path d="M2.400 2.300L5.300 5" stroke="#222" stroke-width="1.500"/></svg></div>
<div class="abs ln" style="left:427px;top:263.1px;width:22.400px">13</div>
<div class="abs cd" style="left:462px;top:264.6px">T H A N K S</div>
<div class="abs ln" style="left:427px;top:277.1px;width:22.400px">14</div>
<div class="abs cd" style="left:462px;top:278.6px">H</div>
<div class="abs ln" style="left:427px;top:291.1px;width:22.400px">15</div>
<div class="abs cd" style="left:462px;top:292.6px">A  VERY</div>
<div class="abs ln" style="left:427px;top:305.1px;width:22.400px">16</div>
<div class="abs cd" style="left:462px;top:306.6px">N  COOL</div>
<div class="abs ln" style="left:427px;top:319.1px;width:22.400px">17</div>
<div class="abs cd" style="left:462px;top:320.6px">K</div>
<div class="abs ln" style="left:427px;top:333.1px;width:22.400px">18</div>
<div class="abs cd" style="left:462px;top:334.6px">S</div>
<div class="abs ln" style="left:427px;top:347.1px;width:22.400px">19</div>
<div class="abs cd" style="left:462px;top:348.6px"><svg width="8" height="14" style="vertical-align:top"><path d="M2.400 2.300L5.300 5" stroke="#222" stroke-width="1.500"/></svg><svg width="8" height="14" style="vertical-align:top"><path d="M2.400 2.300L5.300 5" stroke="#222" stroke-width="1.500"/></svg><svg width="8" height="14" style="vertical-align:top"><path d="M2.400 2.300L5.300 5" stroke="#222" stroke-width="1.500"/></svg></div>
<div class="abs" style="left:425px;top:429px;width:855px;height:277px;background:#fff"></div>
<div class="abs pv" style="left:435px;top:444.70px;font-size:16px;line-height:20.0px;font-style:italic;letter-spacing:0.1px">new markdown page</div>
<div class="abs pv" style="left:435px;top:481.90px;font-size:16px;line-height:20.0px;font-weight:bold;letter-spacing:-0.42px">Cool markdown things</div>
<div class="abs pv" style="left:435px;top:518.80px;font-size:32px;line-height:40.0px;font-weight:bold">hey</div>
<div class="abs pv" style="left:435px;top:572.50px;font-size:24px;line-height:30.0px;font-weight:bold">heya</div>
<div class="abs pv" style="left:435px;top:617.78px;font-size:18.72px;line-height:23.4px;font-weight:bold;font-style:italic;letter-spacing:-0.6px">HOWDY</div>
<div class="abs pv" style="left:435px;top:662.32px;font-size:12.2px;line-height:15.25px;font-family:'Liberation Mono',monospace;letter-spacing:0.68px">I don't know</div>
<div class="abs pv" style="left:435px;top:698.12px;font-size:12.2px;line-height:15.25px;font-family:'Liberation Mono',monospace;letter-spacing:0.68px">T H A N K S</div>
<div class="abs" style="left:1262px;top:429px;width:17px;height:276px;background:linear-gradient(to right,#f3f1ec,#fefefb 40%,#fefefb)"></div><div class="abs" style="left:1263px;top:430px;width:15px;height:16px;border:1px solid #f4f7ff;border-radius:2px;background:linear-gradient(to right,#c8d7fd,#bccffb 55%,#adc3f7);box-shadow:0 1px 0.5px #a9b6d4, 0 0 0 0.5px #c4d2f4"><svg class="abs" style="left:-1px;top:-1px" width="15" height="16"><path d="M3.300 9.600l4.200-4.200 4.200 4.200" fill="none" stroke="#4d6185" stroke-width="2.300"/></svg></div><div class="abs" style="left:1263px;top:688px;width:15px;height:16px;border:1px solid #f4f7ff;border-radius:2px;background:linear-gradient(to right,#c8d7fd,#bccffb 55%,#adc3f7);box-shadow:0 1px 0.5px #a9b6d4, 0 0 0 0.5px #c4d2f4"><svg class="abs" style="left:-1px;top:-1px" width="15" height="16"><path d="M3.300 5.800l4.200 4.200 4.200-4.200" fill="none" stroke="#4d6185" stroke-width="2.300"/></svg></div><div class="abs" style="left:1263px;top:447px;width:15px;height:175px;border:1px solid #f4f7ff;border-radius:2px;background:linear-gradient(to right,#c8d7fd,#bccffb 55%,#adc3f7);box-shadow:0 1px 0.5px #a9b6d4, 0 0 0 0.5px #c4d2f4"><div class="abs" style="left:3.500px;top:83px;width:6px;height:1px;background:#eef4fe"></div><div class="abs" style="left:4.5px;top:84px;width:6px;height:1px;background:#8cb0f8"></div><div class="abs" style="left:3.500px;top:85px;width:6px;height:1px;background:#eef4fe"></div><div class="abs" style="left:4.5px;top:86px;width:6px;height:1px;background:#8cb0f8"></div><div class="abs" style="left:3.500px;top:87px;width:6px;height:1px;background:#eef4fe"></div><div class="abs" style="left:4.5px;top:88px;width:6px;height:1px;background:#8cb0f8"></div><div class="abs" style="left:3.500px;top:89px;width:6px;height:1px;background:#eef4fe"></div><div class="abs" style="left:4.5px;top:90px;width:6px;height:1px;background:#8cb0f8"></div></div>
<div class="abs" style="left:0;top:705.400px;width:1280px;height:2px;background:#2a62dc"></div><div class="abs" style="left:0;top:705.400px;width:94px;height:2px;background:#3f9a42"></div>
</div></body></html>
